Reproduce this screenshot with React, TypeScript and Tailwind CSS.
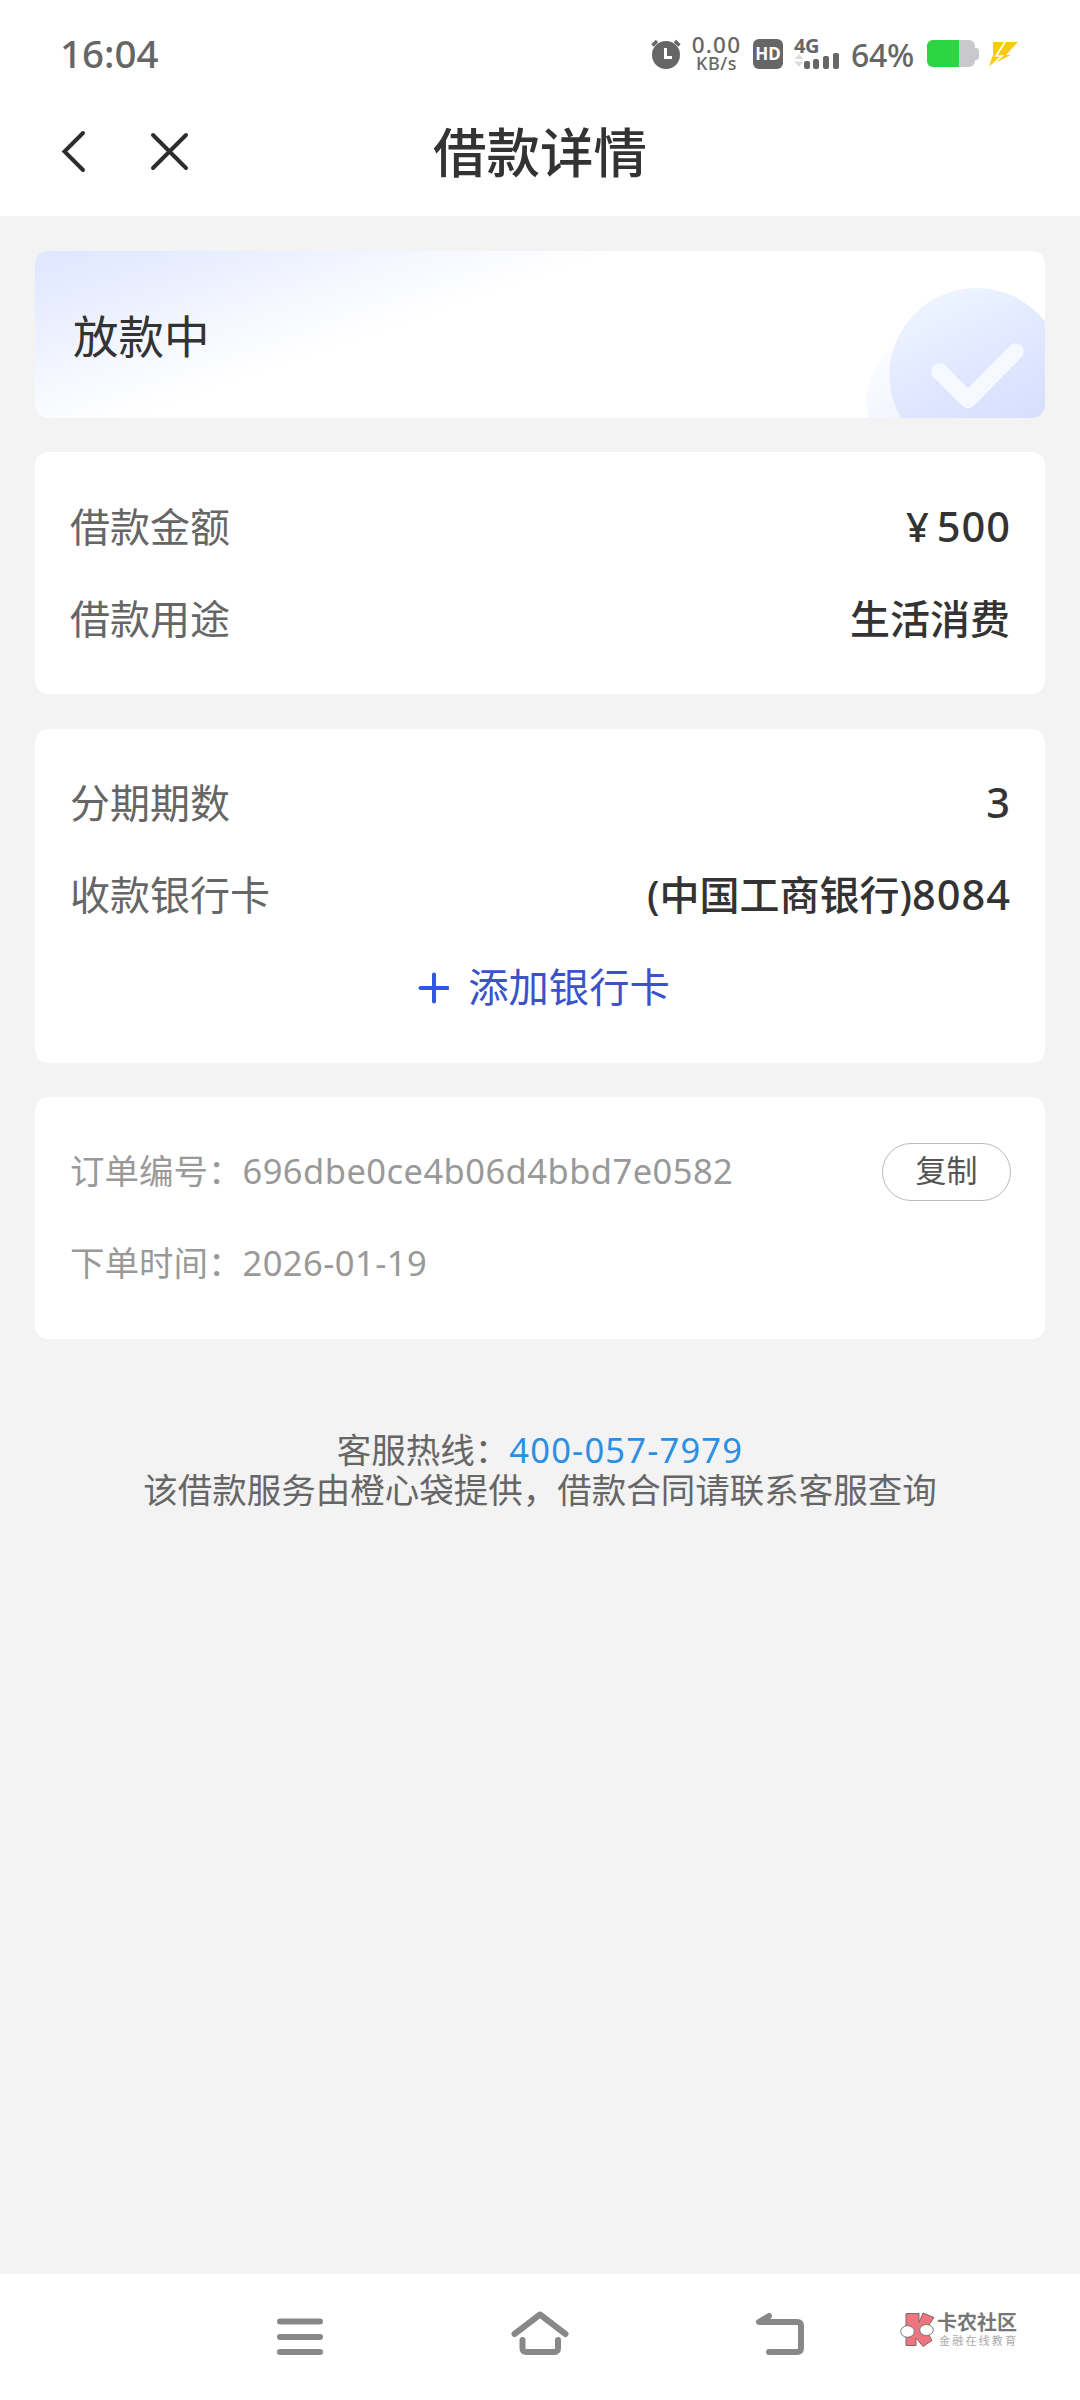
import React from "react";

type RowProps = {
  label: string;
  children: React.ReactNode;
};

function AlarmIcon() {
  return (
    <svg width="32" height="32" viewBox="0 0 32 32" className="shrink-0">
      <circle cx="16" cy="17" r="14" fill="#666" />
      <path d="M2.5 7.5 7 3M29.5 7.5 25 3" stroke="#666" strokeWidth="3.2" fill="none" />
      <path d="M15.5 10v9.5H22" stroke="#fff" strokeWidth="3" fill="none" />
    </svg>
  );
}

function SignalIcon() {
  return (
    <svg width="46" height="16" viewBox="0 0 46 16">
      <path d="M0.5 6 5 1l4.500 5zM0.500 8.500h9L5 14z" fill="#ddd" />
      <rect x="10" y="8" width="6" height="8" rx="2" fill="#666" />
      <rect x="19" y="6" width="6" height="10" rx="2" fill="#666" />
      <rect x="29" y="3" width="6" height="13" rx="2" fill="#666" />
      <rect x="39" y="0" width="6" height="16" rx="2" fill="#666" />
    </svg>
  );
}

function StatusBar() {
  return (
    <div className="flex h-[108px] items-center pb-[1px] pl-[60px] pr-[62px] text-[#666]">
      <span className="text-[38.500px] font-medium leading-none">16:04</span>
      <div className="ml-auto flex h-[36px] items-center">
        <AlarmIcon />
        <div className="ml-[9px] flex w-[51px] flex-col items-center font-medium">
          <span className="text-[22.500px] leading-[19px] tracking-[1.200px]">0.00</span>
          <span className="text-[18px] leading-[18px] tracking-[0.500px]">KB/s</span>
        </div>
        <div className="ml-[11px] flex h-[30px] w-[30px] items-center justify-center rounded-[6px] bg-[#666] text-[17px] font-bold leading-none text-white">
          HD
        </div>
        <div className="ml-[11px] flex w-[46px] flex-col">
          <span className="text-[20px] font-bold leading-[15px] tracking-[-0.5px]">4G</span>
          <SignalIcon />
        </div>
        <span className="ml-[11px] w-[67px] pt-[3px] text-[32px] font-medium leading-none tracking-[-0.300px]">64%</span>
        <div className="ml-[9px] flex items-center">
          <div className="flex h-[27px] w-[48px] overflow-hidden rounded-[6px] bg-[#c9c8cb]">
            <div className="w-[32px] bg-[#2bd640]" />
          </div>
          <div className="h-[12px] w-[4px] rounded-r-[3px] bg-[#c9c8cb]" />
        </div>
        <svg width="30" height="26" viewBox="0 0 30 26" className="ml-[9px]">
          <path d="M5 1h25L18 14h5L1 25 5 14z" fill="#f8cb12" />
          <path d="M17 1 8 15h6L3 25" stroke="#fff" strokeWidth="1.6" fill="none" />
        </svg>
      </div>
    </div>
  );
}

function TitleBar() {
  return (
    <div className="grid h-[108px] grid-cols-[1fr_auto_1fr] items-center pb-[22px]">
      <div className="flex items-center gap-[61px] pl-[60px]">
        <svg width="28" height="44" viewBox="0 0 28 44" fill="none" stroke="#2d2d2d" strokeWidth="4" strokeLinecap="round">
          <path d="M23 4 4.500 22.500 23 41" />
        </svg>
        <svg width="40" height="40" viewBox="0 0 40 40" fill="none" stroke="#2d2d2d" strokeWidth="4" strokeLinecap="round">
          <path d="m4 4 33 33M37 4 4 37" />
        </svg>
      </div>
      <h1 className="pt-[3px] text-[53.500px] font-medium leading-none text-[#333]">借款详情</h1>
      <div />
    </div>
  );
}

function StatusBanner() {
  return (
    <section className="flex h-[167px] justify-between overflow-hidden rounded-[13px] bg-white bg-[linear-gradient(161deg,#dfe6ff_0px,#e9eeff_65px,#f6f8ff_130px,#ffffff_190px)] pl-[38px]">
      <span className="self-center pt-[5px] text-[45.500px] leading-none text-[#333]">放款中</span>
      <svg width="185" height="167" viewBox="860 251 185 167">
        <defs>
          <linearGradient id="small" x1="0" y1="0" x2="0.6" y2="1">
            <stop offset="0" stopColor="#ffffff" />
            <stop offset="1" stopColor="#e9edff" />
          </linearGradient>
          <linearGradient id="big" x1="0.2" y1="0.05" x2="0.6" y2="0.85">
            <stop offset="0" stopColor="#eef5ff" />
            <stop offset="0.5" stopColor="#e2e8ff" />
            <stop offset="1" stopColor="#d7dfff" />
          </linearGradient>
        </defs>
        <circle cx="931" cy="400" r="64.500" fill="url(#small)" />
        <circle cx="976.500" cy="375" r="87" fill="url(#big)" />
        <path
          d="m939.500 371.500 28.500 28.500 47.500-48.500"
          fill="none"
          stroke="#f6f9ff"
          strokeWidth="16.500"
          strokeLinecap="round"
          strokeLinejoin="round"
        />
      </svg>
    </section>
  );
}

function Card({ children }: { children: React.ReactNode }) {
  return <section className="rounded-[13px] bg-white px-[35px] py-[29px]">{children}</section>;
}

function Row({ label, children }: RowProps) {
  return (
    <div className="flex h-[92px] items-center justify-between whitespace-nowrap pb-[1px] text-[40px] leading-none">
      <span className="text-[#666]">{label}</span>
      <span className="font-medium text-[#333]">{children}</span>
    </div>
  );
}

function OrderRow({ label, value, action }: { label: string; value: string; action?: string }) {
  return (
    <div className="flex h-[92px] items-center pb-[1px] text-[34.500px] leading-none text-[#999]">
      <span>{label}</span>
      <span className="tracking-[0.450px]">{value}</span>
      {action && (
        <button className="-mr-px ml-auto flex h-[58px] w-[129px] items-center justify-center rounded-full border-[1.500px] border-[#bbb] pb-[3px] text-[31px] leading-none text-[#555]">
          {action}
        </button>
      )}
    </div>
  );
}

function Watermark() {
  return (
    <div className="flex items-center">
      <svg width="36" height="36" viewBox="0 0 36 36">
        <path d="M6 1.500h13v9l4-9.500 11 4.500-8 12 6 11-9 6-7-8.500v7.500H6z" fill="#ee7480" stroke="#7a6a6c" strokeWidth="1" />
        <ellipse cx="7.500" cy="19.500" rx="6.800" ry="5.800" fill="#fff" stroke="#777" />
        <ellipse cx="26.500" cy="18" rx="6.800" ry="5.500" fill="#fff" stroke="#777" />
      </svg>
      <div className="ml-[1px] flex flex-col">
        <span className="text-[20px] font-bold leading-[20px] text-[#777]">卡农社区</span>
        <span className="ml-[2px] mt-[2px] text-[11px] leading-[12px] tracking-[2.200px] text-[#aaa]">金融在线教育</span>
      </div>
    </div>
  );
}

function NavBar() {
  return (
    <nav className="grid h-[126px] grid-cols-[240px_240px_240px_1fr] bg-white pl-[180px]">
      <svg width="240" height="126" viewBox="180 2274 240 126" fill="none" stroke="#888" strokeWidth="6" strokeLinecap="round">
        <path d="M280 2321.500h40M280 2337h40M280 2352h40" />
      </svg>
      <svg width="240" height="126" viewBox="420 2274 240 126" fill="none" stroke="#888" strokeWidth="6" strokeLinecap="round" strokeLinejoin="round">
        <path d="m514.500 2334 25.500-19.500 25.500 19.500" />
        <path d="M522.500 2340v8q0 4 4 4h27.500q4 0 4-4v-8" />
      </svg>
      <svg width="240" height="126" viewBox="660 2274 240 126" fill="none" stroke="#888" strokeWidth="6" strokeLinecap="round" strokeLinejoin="round">
        <path d="m769 2316-10 6h38q4 0 4 4v22q0 4-4 4h-28" />
      </svg>
      <div className="pt-[38px]">
        <Watermark />
      </div>
    </nav>
  );
}

export default function App() {
  return (
    <div className="flex h-[2400px] w-[1080px] flex-col bg-[#f3f3f3] font-['Noto_Sans','Noto_Sans_CJK_SC',sans-serif]">
      <header className="h-[216px] bg-white">
        <StatusBar />
        <TitleBar />
      </header>

      <main className="flex flex-1 flex-col gap-[34.500px] px-[35px] pt-[34.500px]">
        <StatusBanner />

        <Card>
          <Row label="借款金额">
            <span className="mr-[8px] text-[40px]">¥</span>
            <span className="-mr-[1px] text-[41.500px] tracking-[1px]">500</span>
          </Row>
          <Row label="借款用途">生活消费</Row>
        </Card>

        <Card>
          <Row label="分期期数">
            <span className="text-[41.500px]">3</span>
          </Row>
          <Row label="收款银行卡">
            (中国工商银行)<span className="-mr-[1px] text-[41.500px] tracking-[1px]">8084</span>
          </Row>
          <div className="flex h-[92px] items-center justify-center gap-[19px] pl-[7px] text-[40.300px] leading-none text-[#3b52c8]">
            <svg width="32" height="32" viewBox="0 0 32 32" stroke="#3156e6" strokeWidth="4" strokeLinecap="round">
              <path d="M17 2.500v27M3.500 16h27" />
            </svg>
            <span>添加银行卡</span>
          </div>
        </Card>

        <Card>
          <OrderRow label="订单编号：" value="696dbe0ce4b06d4bbd7e0582" action="复制" />
          <OrderRow label="下单时间：" value="2026-01-19" />
        </Card>

        <footer className="pt-[56px] text-center text-[34.500px] leading-[40px] text-[#666]">
          <p>
            客服热线：<span className="tracking-[1.200px] text-[#2b8fe3]">400-057-7979</span>
          </p>
          <p>该借款服务由橙心袋提供，借款合同请联系客服查询</p>
        </footer>
      </main>

      <NavBar />
    </div>
  );
}
